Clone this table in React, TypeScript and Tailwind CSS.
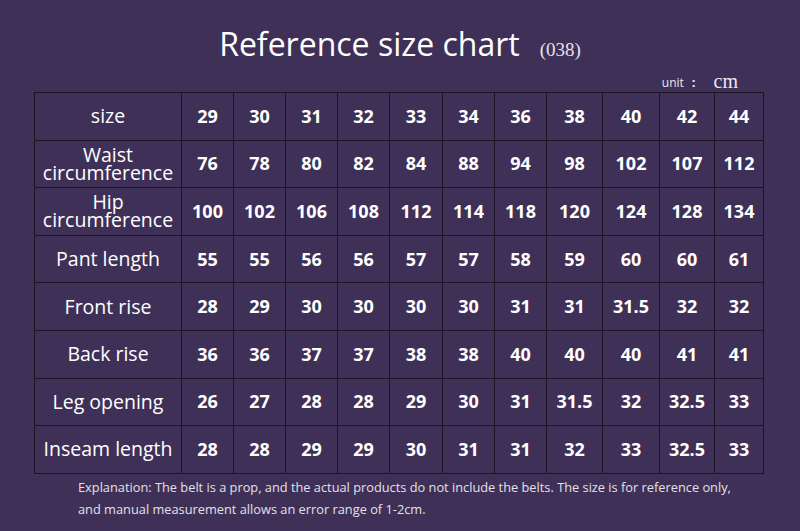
const sizes = ['29', '30', '31', '32', '33', '34', '36', '38', '40', '42', '44'];

const rows: { label: string[]; values: string[] }[] = [
  { label: ['Waist', 'circumference'], values: ['76', '78', '80', '82', '84', '88', '94', '98', '102', '107', '112'] },
  { label: ['Hip', 'circumference'], values: ['100', '102', '106', '108', '112', '114', '118', '120', '124', '128', '134'] },
  { label: ['Pant length'], values: ['55', '55', '56', '56', '57', '57', '58', '59', '60', '60', '61'] },
  { label: ['Front rise'], values: ['28', '29', '30', '30', '30', '30', '31', '31', '31.5', '32', '32'] },
  { label: ['Back rise'], values: ['36', '36', '37', '37', '38', '38', '40', '40', '40', '41', '41'] },
  { label: ['Leg opening'], values: ['26', '27', '28', '28', '29', '30', '31', '31.5', '32', '32.5', '33'] },
  { label: ['Inseam length'], values: ['28', '28', '29', '29', '30', '31', '31', '32', '33', '32.5', '33'] },
];

const colWidths = ['w-[147px]', 'w-[52px]', 'w-[52px]', 'w-[52px]', 'w-[52px]', 'w-[53px]', 'w-[52px]', 'w-[52px]', 'w-[56px]', 'w-[57px]', 'w-[55px]', 'w-[49px]'];

function LabelCell({ lines }: { lines: string[] }) {
  return (
    <td className="border border-[#1b1424] text-center align-middle text-[19.5px] font-normal leading-[18px] text-white">
      {lines.map((l, i) => (
        <div key={i}>{l}</div>
      ))}
    </td>
  );
}

function ValueCell({ value }: { value: string }) {
  return (
    <td className="border border-[#1b1424] text-center align-middle text-[18px] font-bold text-white">{value}</td>
  );
}

export default function App() {
  return (
    <div className="h-[531px] w-[800px] overflow-hidden bg-[#3f3057] font-['Open_Sans',sans-serif] text-white">
      <div className="flex items-baseline justify-center gap-[20px] pt-[22px]">
        <h1 className="text-[32px] font-normal leading-[44px] text-white">Reference size chart</h1>
        <span className="font-['Liberation_Serif',serif] text-[19px] text-[#e6e2ec]">(038)</span>
      </div>

      <div className="mt-[6px] flex h-[18px] items-center justify-end pr-[62px]">
        <span className="pt-[3px] text-[12px] text-[#ece9f0]">unit</span>
        <span className="ml-[8px] pt-[3px] text-[13px] font-bold text-[#ece9f0]">:</span>
        <span className="ml-[18px] font-['Liberation_Serif',serif] text-[20px] leading-[18px] text-[#ece9f0]">cm</span>
      </div>

      <table className="mt-[2px] ml-[34px] w-[729px] table-fixed border-collapse">
        <colgroup>
          {colWidths.map((w, i) => (
            <col key={i} className={w} />
          ))}
        </colgroup>
        <tbody>
          <tr className="h-[47.6px]">
            <LabelCell lines={['size']} />
            {sizes.map((s, i) => (
              <ValueCell key={i} value={s} />
            ))}
          </tr>
          {rows.map((r, i) => (
            <tr key={i} className="h-[47.6px]">
              <LabelCell lines={r.label} />
              {r.values.map((v, j) => (
                <ValueCell key={j} value={v} />
              ))}
            </tr>
          ))}
        </tbody>
      </table>

      <div className="mt-[2px] pl-[78px] text-[12.8px] leading-[22px] text-[#e4e0ea]">
        <p>Explanation: The belt is a prop, and the actual products do not include the belts. The size is for reference only,</p>
        <p>and manual measurement allows an error range of 1-2cm.</p>
      </div>
    </div>
  );
}
